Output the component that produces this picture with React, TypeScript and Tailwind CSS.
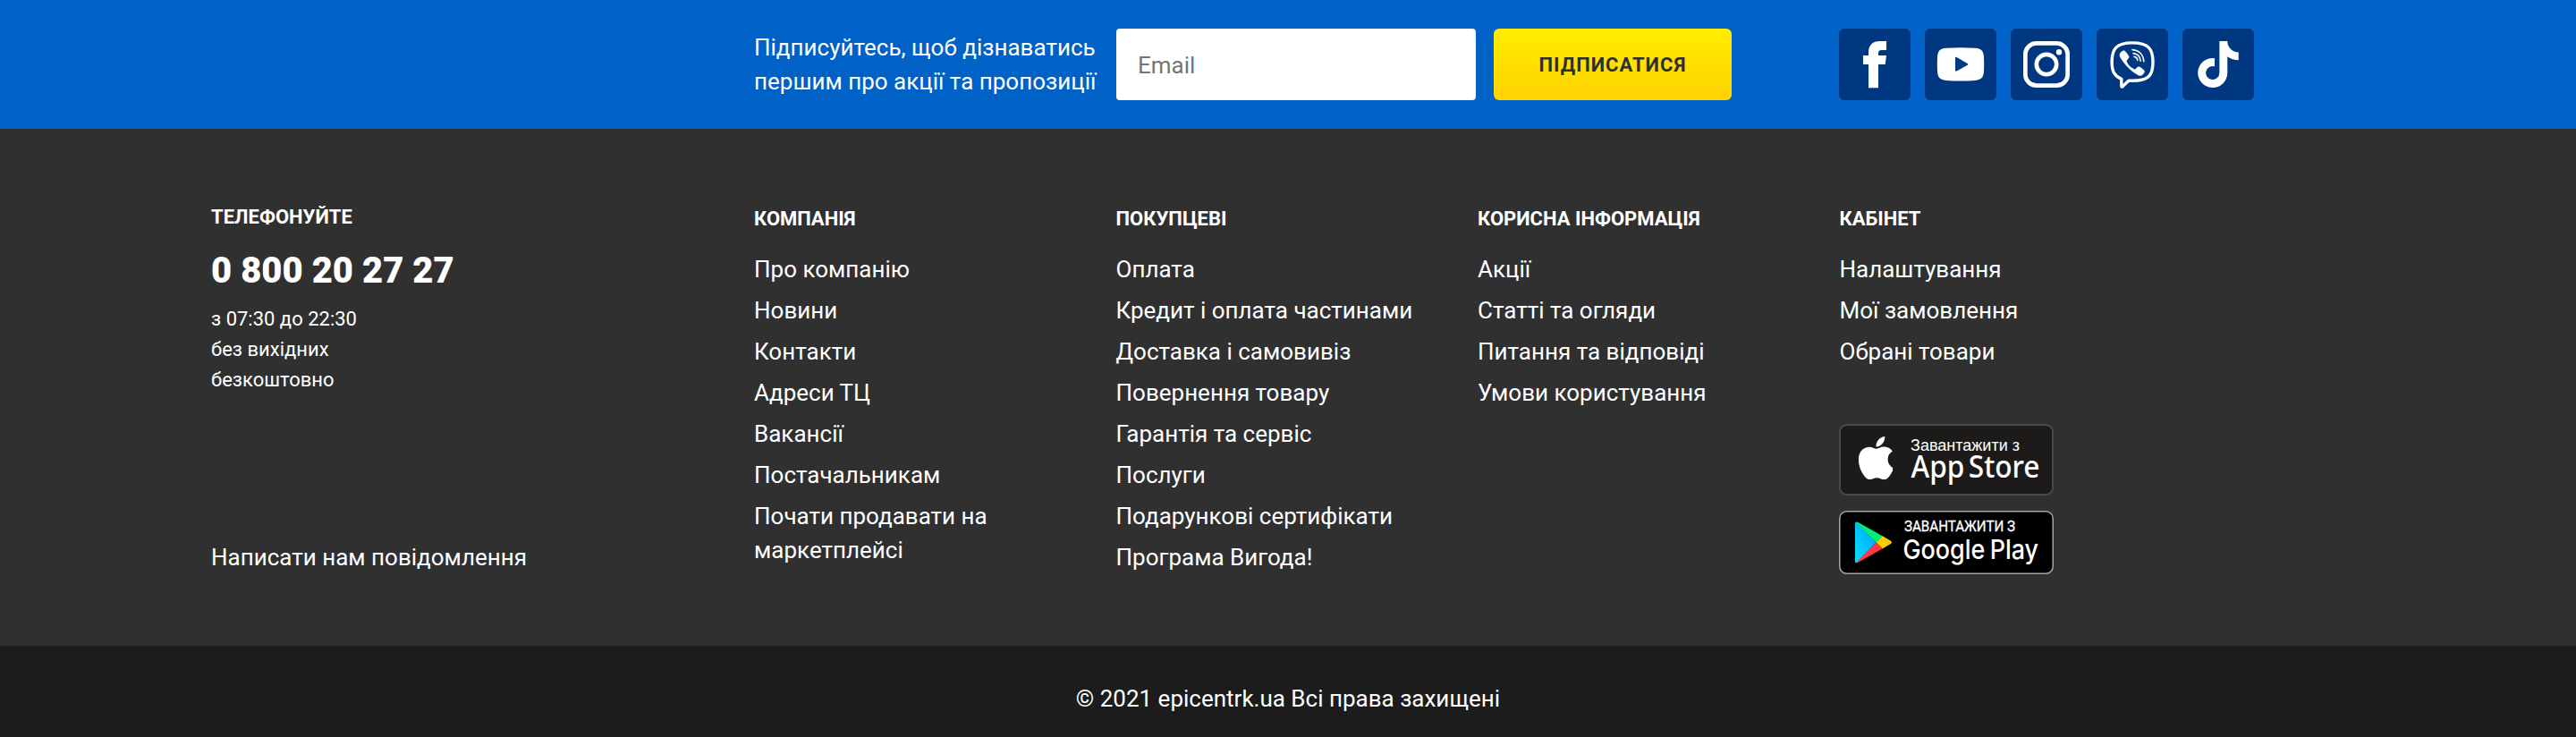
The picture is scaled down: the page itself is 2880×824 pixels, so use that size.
import React from "react";
import { FaTiktok } from "react-icons/fa6";

const columns = [
  {
    title: "КОМПАНІЯ",
    links: ["Про компанію", "Новини", "Контакти", "Адреси ТЦ", "Вакансії", "Постачальникам", "Почати продавати на маркетплейсі"],
  },
  {
    title: "ПОКУПЦЕВІ",
    links: [
      "Оплата",
      "Кредит і оплата частинами",
      "Доставка і самовивіз",
      "Повернення товару",
      "Гарантія та сервіс",
      "Послуги",
      "Подарункові сертифікати",
      "Програма Вигода!",
    ],
  },
  {
    title: "КОРИСНА ІНФОРМАЦІЯ",
    links: ["Акції", "Статті та огляди", "Питання та відповіді", "Умови користування"],
  },
  {
    title: "КАБІНЕТ",
    links: ["Налаштування", "Мої замовлення", "Обрані товари"],
  },
];

function Facebook() {
  return (
    <svg viewBox="0 0 80 80" className="size-20" fill="#fff">
      <path d="M53 14v10h-5.500c-2.600 0-3.500 1.300-3.500 3.500v2.500h9l-1.300 10H44v26.200H33V40h-6V30h6v-3.500C33 18.500 38 14 45.500 14z" />
    </svg>
  );
}

function Youtube() {
  return (
    <svg viewBox="0 0 80 80" className="size-20" fill="#fff">
      <path
        fillRule="evenodd"
        d="M24 21.800C34 21 46 21 56 21.800c7 .5 9.500 3 10 9.700.3 5.500.3 11 0 16.600-.5 6.600-3 9.400-10 9.900-10 .7-22 .7-32 0-7-.5-9.500-3.300-10-9.900-.3-5.500-.3-11.100 0-16.600.5-6.700 3-9.200 10-9.700zM34 33v13.500c0 .9.800 1.300 1.600.9l12-6.600c.9-.5.9-1.300 0-1.800l-12-7c-.8-.4-1.600.1-1.600 1z"
      />
    </svg>
  );
}

function Instagram() {
  return (
    <svg viewBox="0 0 80 80" className="size-20" fill="none" stroke="#fff" strokeWidth="4.700">
      <rect x="16.350" y="16.350" width="47.300" height="47.300" rx="12.500" />
      <circle cx="40" cy="40" r="11.200" />
      <circle cx="54" cy="26.300" r="3.200" fill="#fff" stroke="none" />
    </svg>
  );
}

function Viber() {
  return (
    <svg viewBox="0 0 80 80" className="size-20" fill="none" strokeLinecap="round">
      <path
        d="M27.800 56.200C20.500 53 17.100 48.500 17.100 37.500 17.100 22.500 22 15.900 40 15.900S63 22.500 63 37.500 58 58.300 40 58.300h-4.200L29 64.800c-.6.600-1.200.4-1.200-.5z"
        stroke="#fff"
        strokeWidth="3.400"
        strokeLinejoin="round"
      />
      <path
        d="M27.500 26.300c1.600-1.600 3.400-2 4.700-.6 1.300 1.500 2.700 3.300 3.500 4.900.7 1.500.2 2.600-1.100 3.600-1.300 1-1.500 2-.8 3.500 1.600 3.300 4.200 5.900 7.600 7.500 1.500.7 2.500.3 3.400-1 1-1.400 2.300-1.900 3.900-.9 1.500.9 2.900 2 4.100 3.100 1.200 1.200.6 3-.7 4.300-1.500 1.600-3.300 2.300-5.300 1.200C38.500 47.500 32 41 26.600 32c-1.100-2.200-.8-4 .9-5.700z"
        fill="#fff"
        stroke="#fff"
        strokeWidth=".6"
      />
      <g stroke="#fff" strokeWidth="1.600">
        <path d="M40 23.600c7.500.6 12.300 5.500 12.800 13.200" />
        <path d="M41 27.600c5 .5 7.700 3.600 8.100 8.600" />
        <path d="M42 31.400c2.300.3 3.500 1.600 3.700 4" />
      </g>
    </svg>
  );
}

function Tiktok() {
  return <FaTiktok className="h-[52px] w-[46px] text-white" />;
}

function AppStoreBadge() {
  return (
    <a href="#" aria-label="App Store" className="block h-20 w-60">
      <svg viewBox="0 0 240 80" className="block h-20 w-60 overflow-visible">
        <rect x="1" y="1" width="238" height="78" rx="7.500" fill="#1c1b1a" stroke="#4b4a4a" strokeWidth="2" />
        <svg x="21.800" y="14" width="38.300" height="48.300" viewBox="4 32 367 448" preserveAspectRatio="none">
          <path
            fill="#fff"
            d="M318.700 268.700c-.2-36.700 16.400-64.400 50-84.800-18.800-26.900-47.200-41.700-84.700-44.600-35.500-2.800-74.300 20.700-88.500 20.700-15 0-49.400-19.700-76.400-19.700C63.300 141.200 4 184.800 4 273.500q0 39.300 14.400 81.200c12.800 36.700 59 126.700 107.200 125.200 25.200-.6 43-17.900 75.800-17.900 31.800 0 48.300 17.900 76.400 17.900 48.600-.7 90.400-82.500 102.600-119.300-65.200-30.700-61.700-90-61.700-91.900zm-56.600-164.200c27.300-32.400 24.800-61.900 24-72.500-24.100 1.400-52 16.400-67.900 34.900-17.500 19.800-27.800 44.300-25.600 71.900 26.100 2 49.900-11.400 69.500-34.300z"
          />
        </svg>
        <text x="80" y="30" textLength="122" lengthAdjust="spacingAndGlyphs" fill="#fff" className="font-['Liberation_Sans',sans-serif] text-[17.500px]">
          Завантажити з
        </text>
        <text x="80.500" y="60" textLength="144" lengthAdjust="spacingAndGlyphs" fill="#fff" className="font-['Noto_Sans',sans-serif] text-[33.500px] font-medium [word-spacing:-4px]">
          App Store
        </text>
      </svg>
    </a>
  );
}

function GooglePlayBadge() {
  return (
    <a href="#" aria-label="Google Play" className="mt-[17px] block h-[71px] w-60">
      <svg viewBox="0 0 240 71" className="block h-[71px] w-60 overflow-visible">
        <rect x=".75" y=".75" width="238.500" height="69.500" rx="8" fill="#000" stroke="#a6a6a6" strokeWidth="1.500" />
        <defs>
          <linearGradient id="play-blue" x1="1" y1="0" x2="0" y2="1">
            <stop offset="0" stopColor="#00a0ff" />
            <stop offset="1" stopColor="#00e2ff" />
          </linearGradient>
        </defs>
        <path d="M18 14.500c0-1.200.6-1.800 1.500-1.800L41.500 35.500 19.500 58.300c-.9 0-1.500-.6-1.500-1.800z" fill="url(#play-blue)" />
        <path d="M19 12.600c.8-.2 1.600 0 2.500.5L48.600 28.300 41.500 35.500z" fill="#00f076" />
        <path d="M48.600 28.300 57.500 33.500c1.700 1 1.700 2.800 0 3.800L48.600 42.600 41.500 35.500z" fill="#ffce00" />
        <path d="M41.500 35.500 48.600 42.600 21.500 57.800c-.9.500-1.700.7-2.500.5z" fill="#ff3a44" />
        <text x="73" y="23.300" textLength="124" lengthAdjust="spacingAndGlyphs" fill="#fff" stroke="#fff" strokeWidth=".3" className="font-['Roboto',sans-serif] text-[16px]">
          ЗАВАНТАЖИТИ З
        </text>
        <text x="71.500" y="53.500" textLength="151.500" lengthAdjust="spacingAndGlyphs" fill="#fff" className="font-['Inter',sans-serif] text-[30px] leading-[34px] font-medium [word-spacing:-2px]">
          Google Play
        </text>
      </svg>
    </a>
  );
}

const socials = [
  { name: "Facebook", Icon: Facebook },
  { name: "YouTube", Icon: Youtube },
  { name: "Instagram", Icon: Instagram },
  { name: "Viber", Icon: Viber },
  { name: "TikTok", Icon: Tiktok },
];

export default function App() {
  return (
    <footer className="flex h-[824px] w-[2880px] flex-col overflow-hidden bg-[#1c1c1c] font-['Roboto',sans-serif] text-[26px] leading-[38px] text-white">
      <section className="flex h-36 shrink-0 items-center bg-[#0061c6] pl-[843px]">
        <p className="w-[405px] shrink-0 whitespace-nowrap">
          Підписуйтесь, щоб дізнаватись
          <br />
          першим про акції та пропозиції
        </p>
        <input
          type="email"
          placeholder="Email"
          className="h-20 w-[402px] shrink-0 rounded-[4px] bg-white px-6 pt-0.5 text-[#303030] placeholder:text-[#757575]"
        />
        <button
          type="button"
          className="ml-5 h-20 w-[266px] shrink-0 rounded-[6px] bg-linear-to-b from-[#ffed00] to-[#ffd200] pt-0.5 text-[22px] font-bold tracking-[1px] text-[#303030]"
        >
          ПІДПИСАТИСЯ
        </button>
        <div className="ml-[120px] flex gap-4">
          {socials.map(({ name, Icon }) => (
            <a key={name} href="#" aria-label={name} className="flex size-20 items-center justify-center rounded-[6px] bg-[#003781]">
              <Icon />
            </a>
          ))}
        </div>
      </section>

      <section className="flex h-[578px] shrink-0 bg-[#303030] pl-[236px]">
        <div className="flex w-[607px] shrink-0 flex-col pt-[84px]">
          <h3 className="text-[22px] leading-[30px] font-bold">ТЕЛЕФОНУЙТЕ</h3>
          <a href="#" className="mt-[21px] text-[40px] leading-[48px] font-black">
            0 800 20 27 27
          </a>
          <p className="mt-[13px] text-[22px] leading-[34px]">
            з 07:30 до 22:30
            <br />
            без вихідних
            <br />
            безкоштовно
          </p>
          <a href="#" className="mt-[162px]">
            Написати нам повідомлення
          </a>
        </div>
        {columns.map((column, index) => (
          <div key={column.title} className="w-[404.500px] shrink-0 pt-[86px]">
            <h3 className="text-[22px] leading-[30px] font-bold">{column.title}</h3>
            <ul className="mt-[22px] flex flex-col gap-2 pr-[90px] whitespace-nowrap">
              {column.links.map((link) => (
                <li key={link} className={link.length > 30 ? "w-[300px] whitespace-normal" : ""}>
                  <a href="#">{link}</a>
                </li>
              ))}
            </ul>
            {index === 3 && (
              <div className="mt-[62px] -ml-[0.500px]">
                <AppStoreBadge />
                <GooglePlayBadge />
              </div>
            )}
          </div>
        ))}
      </section>

      <section className="flex flex-1 justify-center pt-10">
        <p>© 2021 epicentrk.ua Всі права захищені</p>
      </section>
    </footer>
  );
}
